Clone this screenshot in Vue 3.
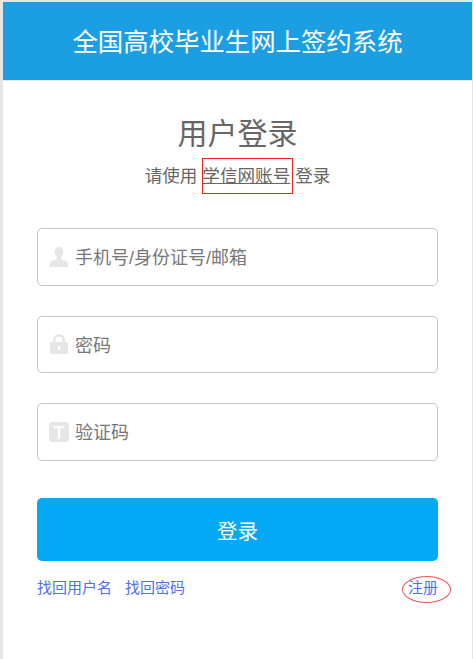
<script setup>
const fields = [
  { id: 'user', placeholder: '手机号/身份证号/邮箱' },
  { id: 'lock', placeholder: '密码' },
  { id: 'code', placeholder: '验证码' }
];
</script>

<template>
  <div class="page">
    <header class="top-bar">全国高校毕业生网上签约系统</header>

    <main class="login">
      <h1 class="title">用户登录</h1>
      <p class="subtitle">请使用 <a class="account">学信网账号</a> 登录</p>

      <div class="fields">
        <label v-for="field in fields" :key="field.id" class="field">
          <svg v-if="field.id === 'user'" class="icon" viewBox="0 0 18 20">
            <path d="M9 0c2.8 0 4.3 2 4.3 4.6 0 2.200-.9 4.100-2.100 5.200v1.700c0 .7 1.200 1.200 3 2 2 .8 3.800 1.600 3.800 3.300V20H0v-3.200c0-1.700 1.800-2.500 3.800-3.300 1.800-.8 3-1.300 3-2V9.800C5.600 8.700 4.700 6.800 4.700 4.600 4.700 2 6.200 0 9 0z" />
          </svg>
          <svg v-else-if="field.id === 'lock'" class="icon" viewBox="0 0 18 20">
            <path fill-rule="evenodd" d="M3 8V6a6 6 0 0 1 12 0v2h.500A2.500 2.500 0 0 1 18 10.500v7a2.500 2.500 0 0 1-2.500 2.500h-13A2.500 2.500 0 0 1 0 17.500v-7A2.500 2.500 0 0 1 2.500 8H3zm2.500 0h7V6a3.500 3.500 0 0 0-7 0v2zM8 12v4h2v-4H8z" />
          </svg>
          <svg v-else class="icon icon-code" viewBox="0 0 20 20">
            <path fill-rule="evenodd" d="M3 0h14a3 3 0 0 1 3 3v14a3 3 0 0 1-3 3H3a3 3 0 0 1-3-3V3a3 3 0 0 1 3-3zm1.500 4v2.200h4.300V17h2.400V6.200h4.300V4h-11z" />
          </svg>
          <input type="text" :placeholder="field.placeholder" />
        </label>
      </div>

      <button class="submit" type="button"><span>登录</span></button>

      <div class="links">
        <a>找回用户名</a>
        <a>找回密码</a>
        <a class="register">注册</a>
      </div>
    </main>
  </div>
</template>

<style scoped>
.page {
  height: 659px;
  box-sizing: border-box;
  padding: 2px 1px 0 3px;
  background: #e6e6e6;
  font-family: "Microsoft YaHei", "Liberation Sans", "Noto Sans CJK SC", sans-serif;
  overflow: hidden;
}
.top-bar {
  height: 78px;
  line-height: 81px;
  background: #1c9fe2;
  color: #fff;
  font-size: 25.4px;
  text-align: center;
  border-bottom: 1px solid #e6e6e6;
}
.login {
  height: 578px;
  box-sizing: border-box;
  padding: 0 34px;
  background: #fff;
}
.title {
  margin: 0;
  padding-top: 30px;
  font-size: 30px;
  line-height: 46px;
  font-weight: normal;
  text-align: center;
  color: #666;
}
.subtitle {
  margin: 1px 0 0;
  font-size: 17.6px;
  line-height: 36px;
  text-align: center;
  color: #666;
}
.account {
  position: relative;
  color: #666;
  text-decoration: underline;
}
/* annotation drawn over the screenshot */
.account::after {
  content: "";
  position: absolute;
  left: 0;
  right: -3px;
  top: -8px;
  bottom: -8px;
  border: 1px solid #f02020;
}
.fields {
  display: flex;
  flex-direction: column;
  gap: 30px;
  margin-top: 34px;
}
.field {
  display: flex;
  align-items: center;
  gap: 7px;
  height: 55.6px;
  padding-left: 12px;
  border: 1px solid #c6c6c6;
  border-radius: 5px;
}
.icon {
  flex: none;
  width: 18px;
  height: 20px;
  fill: #e6e6e6;
}
.icon-code {
  width: 20px;
  margin-left: -1px;
  margin-right: -1px;
}
.field input {
  flex: 1;
  min-width: 0;
  height: 100%;
  box-sizing: border-box;
  border: none;
  outline: none;
  padding: 4px 0 0;
  background: transparent;
  font: inherit;
  font-size: 18px;
  color: #666;
}
.field input::placeholder {
  color: #777;
  opacity: 1;
}
.submit {
  display: block;
  width: 100%;
  height: 63px;
  margin-top: 37.4px;
  padding: 1px 0 0;
  border: none;
  border-radius: 5px;
  background: #03a9f5;
  color: #fff;
  font: inherit;
  font-size: 20.5px;
}
.links {
  display: flex;
  gap: 13px;
  margin-top: 17px;
  font-size: 15px;
  line-height: 20px;
  color: #4f70e8;
}
.register {
  position: relative;
  margin-left: auto;
}
.register::after {
  content: "";
  position: absolute;
  left: -6px;
  right: -13px;
  top: -2px;
  bottom: -5px;
  border: 1px solid #f2565c;
  border-radius: 50%;
}
</style>

<style>
html, body {
  margin: 0;
  background: #fff;
}
</style>
